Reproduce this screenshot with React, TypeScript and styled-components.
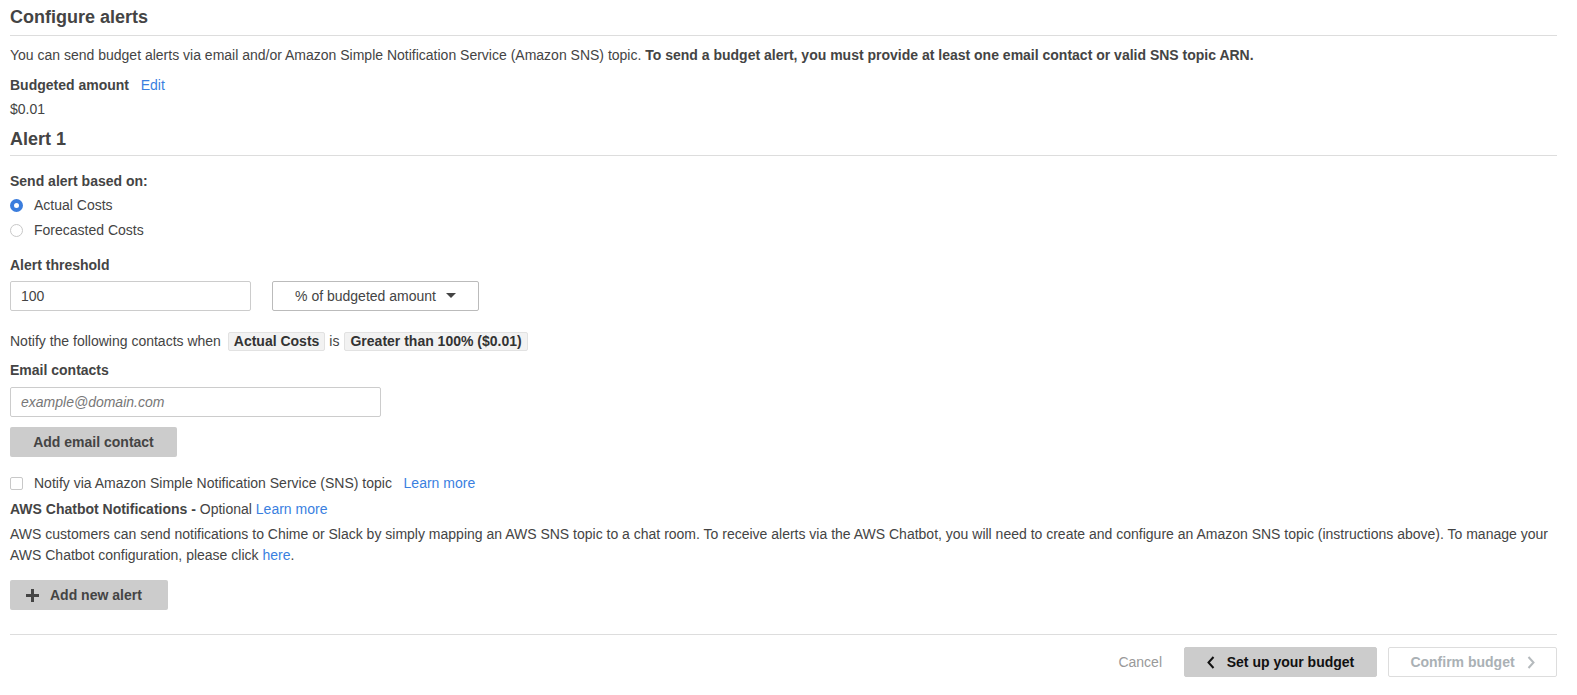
import React from 'react';
import styled, { createGlobalStyle } from 'styled-components';

const GlobalStyle = createGlobalStyle`
    body {
        margin: 0;
        background: #fff;
        font-family: 'Liberation Sans', Arial, sans-serif;
        font-size: 14px;
        color: #444;
    }
`;

const Page = styled.div`
    padding: 0 20px 0 10px;
`;

const SectionTitle = styled.h2<{ $top?: number; $bottom?: number }>`
    margin: 0;
    font-size: 18px;
    line-height: 22px;
    font-weight: bold;
    color: #444;
    padding: ${(p) => p.$top ?? 0}px 0 ${(p) => p.$bottom ?? 7}px;
    border-bottom: 1px solid #ddd;
`;

const Text = styled.p<{ $mt?: number }>`
    margin: ${(p) => p.$mt ?? 0}px 0 0;
    line-height: 20px;
`;

const Para = styled.p`
    margin: 5px 0 0;
    line-height: 21px;
`;

const Label = styled.div<{ $mt?: number }>`
    margin-top: ${(p) => p.$mt ?? 0}px;
    font-weight: bold;
    line-height: 20px;
`;

const Link = styled.a`
    color: #3a7fdf;
    text-decoration: none;
    font-weight: normal;
    cursor: pointer;
`;

const OptionRow = styled.label<{ $mt?: number }>`
    display: flex;
    align-items: center;
    gap: 11px;
    margin-top: ${(p) => p.$mt ?? 0}px;
    height: 20px;
`;

const Radio = styled.span<{ $checked?: boolean }>`
    width: 13px;
    height: 13px;
    box-sizing: border-box;
    border-radius: 50%;
    border: ${(p) => (p.$checked ? '4px solid #3b7ddd' : '1px solid #c8c8c8')};
    background: #fff;
`;

const Check = styled.span`
    width: 13px;
    height: 13px;
    box-sizing: border-box;
    border-radius: 2px;
    border: 1px solid #c8c8c8;
    background: #fff;
`;

const FieldRow = styled.div<{ $mt?: number }>`
    display: flex;
    gap: 21px;
    margin-top: ${(p) => p.$mt ?? 6}px;
`;

const Input = styled.input<{ $width: number }>`
    width: ${(p) => p.$width}px;
    height: 30px;
    box-sizing: border-box;
    border: 1px solid #ccc;
    border-radius: 2px;
    padding: 0 10px;
    font-family: inherit;
    font-size: 14px;
    color: #444;
    outline: 0;

    &::placeholder {
        color: #777;
        font-style: italic;
    }
`;

const SelectBox = styled.div`
    width: 207px;
    height: 30px;
    box-sizing: border-box;
    border: 1px solid #bbb;
    border-radius: 2px;
    display: flex;
    align-items: center;
    justify-content: center;
    gap: 10px;
    color: #444;
`;

const Badge = styled.span<{ $ml: number }>`
    display: inline-block;
    background: #f2f2f2;
    border: 1px solid #e2e2e2;
    border-radius: 2px;
    padding: 0 5px;
    line-height: 17px;
    font-weight: bold;
    margin: 0 4px 0 ${(p) => p.$ml}px;
    color: #333;
`;

const GreyButton = styled.button<{ $width?: number; $mt?: number; $icon?: boolean }>`
    display: inline-flex;
    align-items: center;
    justify-content: ${(p) => (p.$icon ? 'flex-start' : 'center')};
    gap: 11px;
    width: ${(p) => (p.$width ? `${p.$width}px` : 'auto')};
    height: 30px;
    margin-top: ${(p) => p.$mt ?? 0}px;
    padding: 0 ${(p) => (p.$icon ? 16 : 10)}px;
    border: 0;
    border-radius: 2px;
    background: #ccc;
    font-family: inherit;
    font-size: 14px;
    font-weight: bold;
    color: #444;
`;

const Footer = styled.div`
    margin-top: 24px;
    border-top: 1px solid #ddd;
    padding-top: 12px;
    display: flex;
    justify-content: flex-end;
    align-items: center;
`;

const CancelButton = styled.button`
    border: 0;
    background: none;
    font-family: inherit;
    font-size: 14px;
    color: #999;
    padding: 0;
    margin-right: 22px;
`;

const NavButton = styled.button<{ $primary?: boolean }>`
    height: 30px;
    box-sizing: border-box;
    display: inline-flex;
    align-items: center;
    justify-content: center;
    gap: 12px;
    border-radius: 2px;
    font-family: inherit;
    font-size: 14px;
    font-weight: bold;
    border: 1px solid ${(p) => (p.$primary ? '#ccc' : '#ddd')};
    background: ${(p) => (p.$primary ? '#ccc' : '#fff')};
    color: ${(p) => (p.$primary ? '#111' : '#aab1b5')};
    width: ${(p) => (p.$primary ? 193 : 169)}px;
    margin-left: ${(p) => (p.$primary ? 0 : 11)}px;
`;

const Chevron = ({ dir, color }: { dir: 'left' | 'right'; color: string }) => (
    <svg width="8" height="13" viewBox="0 0 8 13">
        <path
            d={dir === 'left' ? 'M6.5 1 L1.5 6.5 L6.5 12' : 'M1.5 1 L6.5 6.5 L1.5 12'}
            fill="none"
            stroke={color}
            strokeWidth="2"
        />
    </svg>
);

const Caret = () => (
    <svg width="10" height="6" viewBox="0 0 10 6">
        <path d="M0 0 L10 0 L5 5 Z" fill="#444" />
    </svg>
);

const Plus = () => (
    <svg width="13" height="13" viewBox="0 0 13 13">
        <path d="M5 0 H8 V5 H13 V8 H8 V13 H5 V8 H0 V5 H5 Z" fill="#444" />
    </svg>
);

export default function App() {
    return (
        <Page>
            <GlobalStyle />
            <SectionTitle $top={6}>Configure alerts</SectionTitle>
            <Text $mt={9}>
                You can send budget alerts via email and/or Amazon Simple Notification Service (Amazon SNS) topic.{' '}
                <b>To send a budget alert, you must provide at least one email contact or valid SNS topic ARN.</b>
            </Text>
            <Label $mt={10}>
                Budgeted amount&nbsp;&nbsp; <Link>Edit</Link>
            </Label>
            <Text $mt={4}>$0.01</Text>
            <SectionTitle $top={9} $bottom={5}>
                Alert 1
            </SectionTitle>

            <Label $mt={15}>Send alert based on:</Label>
            <OptionRow $mt={4}>
                <Radio $checked />
                Actual Costs
            </OptionRow>
            <OptionRow $mt={5}>
                <Radio />
                Forecasted Costs
            </OptionRow>

            <Label $mt={15}>Alert threshold</Label>
            <FieldRow>
                <Input $width={241} defaultValue="100" />
                <SelectBox>
                    % of budgeted amount <Caret />
                </SelectBox>
            </FieldRow>

            <Text $mt={20}>
                Notify the following contacts when <Badge $ml={3}>Actual Costs</Badge>is
                <Badge $ml={5}>Greater than 100% ($0.01)</Badge>
            </Text>
            <Label $mt={9}>Email contacts</Label>
            <FieldRow $mt={7}>
                <Input $width={371} placeholder="example@domain.com" />
            </FieldRow>
            <GreyButton $width={167} $mt={10}>
                Add email contact
            </GreyButton>

            <OptionRow $mt={16}>
                <Check />
                <span>
                    Notify via Amazon Simple Notification Service (SNS) topic&nbsp;&nbsp; <Link>Learn more</Link>
                </span>
            </OptionRow>
            <Text $mt={6}>
                <b>AWS Chatbot Notifications -</b> Optional <Link>Learn more</Link>
            </Text>
            <Para>
                AWS customers can send notifications to Chime or Slack by simply mapping an AWS SNS topic to a chat room. To
                receive alerts via the AWS Chatbot, you will need to create and configure an Amazon SNS topic (instructions
                above). To manage your AWS Chatbot configuration, please click <Link>here</Link>.
            </Para>
            <GreyButton $width={158} $mt={14} $icon>
                <Plus />
                Add new alert
            </GreyButton>

            <Footer>
                <CancelButton>Cancel</CancelButton>
                <NavButton $primary>
                    <Chevron dir="left" color="#111" />
                    Set up your budget
                </NavButton>
                <NavButton>
                    Confirm budget
                    <Chevron dir="right" color="#b5babd" />
                </NavButton>
            </Footer>
        </Page>
    );
}
